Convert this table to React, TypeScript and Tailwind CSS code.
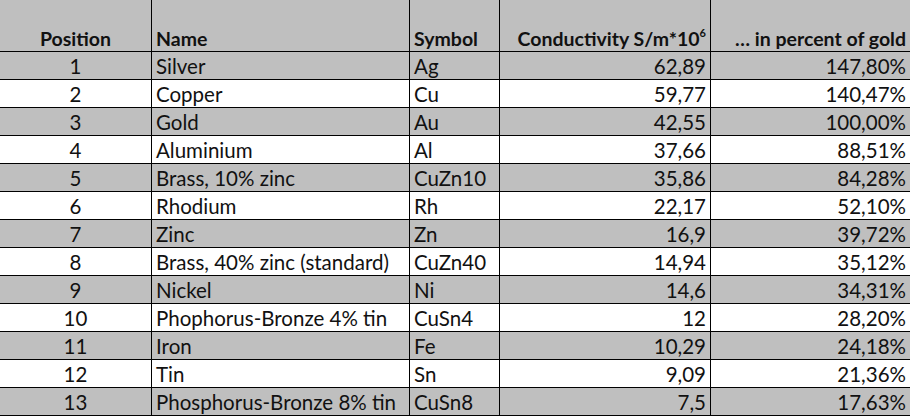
const rows: [number, string, string, string, string][] = [
  [1, 'Silver', 'Ag', '62,89', '147,80%'],
  [2, 'Copper', 'Cu', '59,77', '140,47%'],
  [3, 'Gold', 'Au', '42,55', '100,00%'],
  [4, 'Aluminium', 'Al', '37,66', '88,51%'],
  [5, 'Brass, 10% zinc', 'CuZn10', '35,86', '84,28%'],
  [6, 'Rhodium', 'Rh', '22,17', '52,10%'],
  [7, 'Zinc', 'Zn', '16,9', '39,72%'],
  [8, 'Brass, 40% zinc (standard)', 'CuZn40', '14,94', '35,12%'],
  [9, 'Nickel', 'Ni', '14,6', '34,31%'],
  [10, 'Phophorus-Bronze 4% tin', 'CuSn4', '12', '28,20%'],
  [11, 'Iron', 'Fe', '10,29', '24,18%'],
  [12, 'Tin', 'Sn', '9,09', '21,36%'],
  [13, 'Phosphorus-Bronze 8% tin', 'CuSn8', '7,5', '17,63%'],
]

const cols = 'grid grid-cols-[152px_258px_90px_211px_199px]'

export default function App() {
  return (
    <div className="w-[910px] h-[416px] overflow-hidden bg-white text-[#111] font-['Lato',sans-serif]">
      {/* Header */}
      <div className={`${cols} h-[52px] bg-[#bfbfbf] border-b border-black font-bold text-[19.5px] leading-none`}>
        <div className="flex items-end justify-center pb-[3px] border-r border-black">Position</div>
        <div className="flex items-end pl-1 pb-[3px] border-r border-black">Name</div>
        <div className="flex items-end pl-1 pb-[3px] border-r border-black">Symbol</div>
        <div className="flex items-end justify-end pr-1 pb-[3px] border-r border-black">
          <span>
            Conductivity S/m*10<sup className="text-[11px] align-top relative top-[4px]">6</sup>
          </span>
        </div>
        <div className="flex items-end justify-end pr-1 pb-[3px]">
          <span>… in percent of gold</span>
        </div>
      </div>

      {/* Rows */}
      {rows.map(([pos, name, sym, cond, pct]) => (
        <div
          key={pos}
          className={`${cols} h-[28px] border-b border-black text-[20.5px] leading-none ${pos % 2 === 1 ? 'bg-[#bfbfbf]' : 'bg-white'}`}
        >
          <div className="flex items-center justify-center pt-[2px] border-r border-black">{pos}</div>
          <div className="flex items-center pl-1 pt-[2px] border-r border-black">{name}</div>
          <div className="flex items-center pl-1 pt-[2px] border-r border-black">{sym}</div>
          <div className="flex items-center justify-end pr-1 pt-[2px] border-r border-black">{cond}</div>
          <div className="flex items-center justify-end pr-1 pt-[2px]">{pct}</div>
        </div>
      ))}
    </div>
  )
}
